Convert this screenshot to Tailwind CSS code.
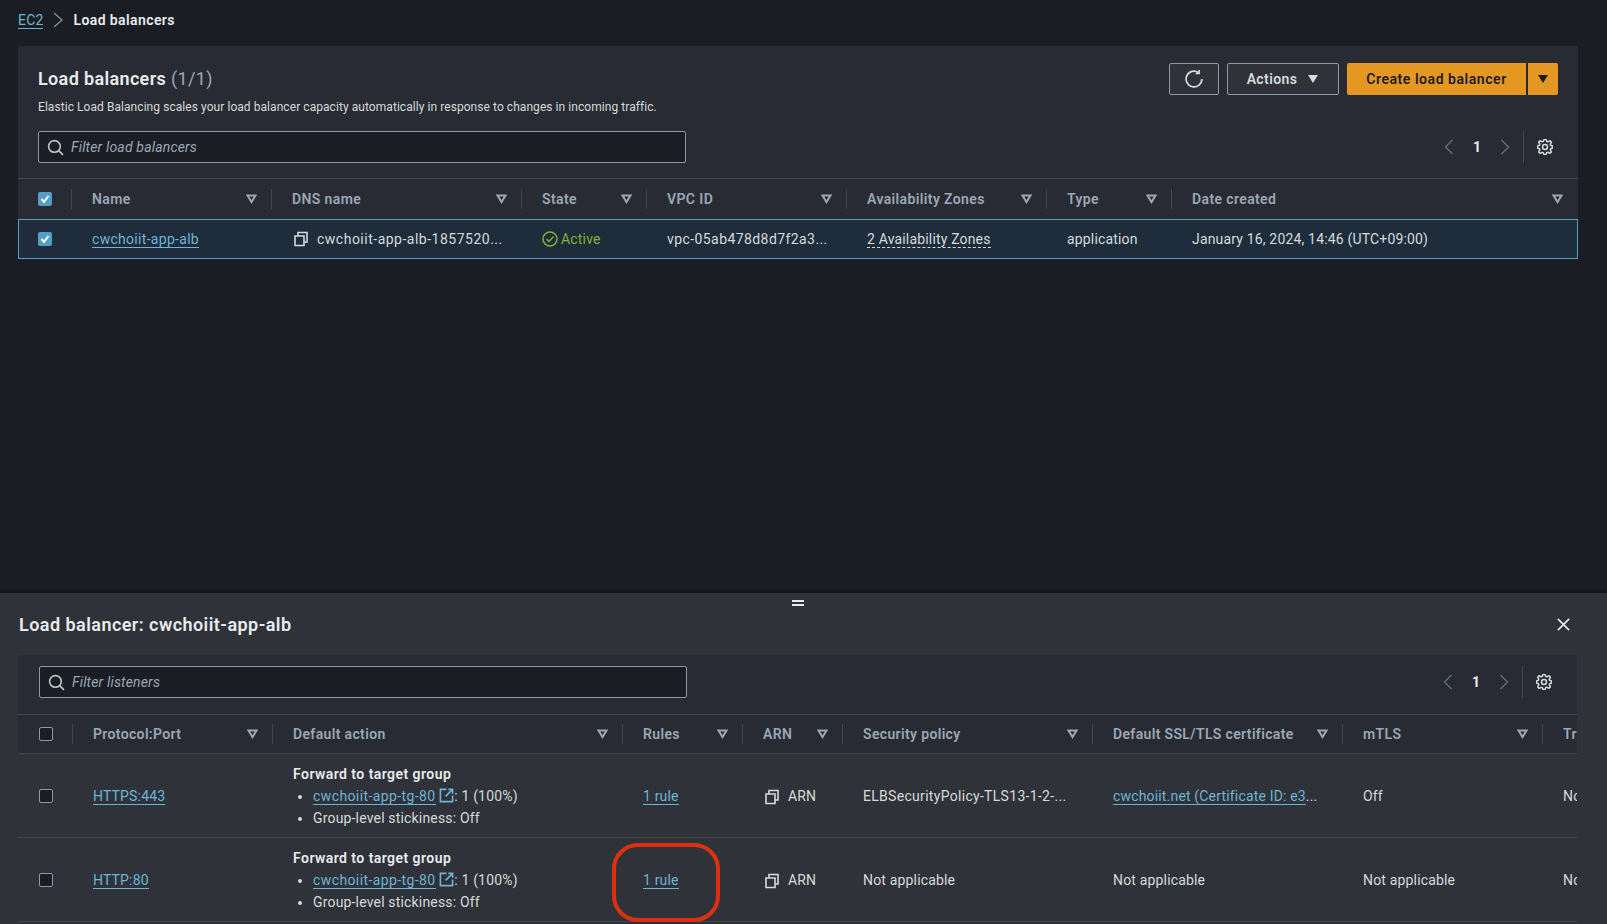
<!DOCTYPE html>
<html lang="en">
<head>
  <meta charset="UTF-8" />
  <title>Load balancers | EC2</title>
  <script src="https://cdn.jsdelivr.net/npm/@tailwindcss/browser@4"></script>
</head>
<body class="bg-[#1b1d24] font-['Roboto',sans-serif] text-[14px] tracking-[0.17px] text-[#d5dbdb]">
  <div class="h-[924px] w-[1607px] overflow-hidden flex flex-col">

    <!-- Top area -->
    <div class="h-[590px] shrink-0 px-[18px]">
      <!-- Breadcrumb -->
      <nav class="h-[46px] flex items-center pb-[6px] text-[14px]">
        <a class="text-[#6cb5d6] border-b border-[#6cb5d6] leading-[16px]">EC2</a>
        <svg class="w-[12px] h-[16px] mx-[9px] text-[#7d8998]" viewBox="0 0 12 16" fill="none" stroke="currentColor" stroke-width="1.5"><path d="M2 1l8 7-8 7"/></svg>
        <span class="font-semibold tracking-[0.4px] text-[#e9ebed]">Load balancers</span>
      </nav>

      <!-- Load balancers card -->
      <section class="bg-[#282b33] w-[1560px] h-[173px] flex flex-col">
        <div class="h-[133px] px-[20px] border-b border-[#414750] relative">
          <div class="flex justify-between pt-[18px]">
            <div>
              <h1 class="text-[18px] leading-[30px] font-semibold tracking-[0.35px] text-[#e9ebed]">Load balancers <span class="font-normal text-[#9ba7b6]">(1/1)</span></h1>
              <p class="text-[12px] leading-[16px] mt-[5px] tracking-[0.06px] text-[#d5dbdb]">Elastic Load Balancing scales your load balancer capacity automatically in response to changes in incoming traffic.</p>
            </div>
            <div class="flex items-center gap-[8px] h-[32px] self-start -mt-px">
              <button class="w-[50px] h-[32px] flex items-center justify-center border border-[#8d99a8] rounded-[2px] bg-[#2f3238] text-[#d5dbdb]">
                <svg class="w-[18px] h-[18px]" viewBox="0 0 16 16" fill="none" stroke="currentColor" stroke-width="1.5"><path d="M15 8a7 7 0 1 1-3-5.74"/><path d="M12.5 0v3h-3"/></svg>
              </button>
              <button class="w-[112px] h-[32px] flex items-center justify-center gap-[10px] border border-[#8d99a8] rounded-[2px] bg-[#2f3238] font-semibold tracking-[0.4px] text-[#d5dbdb]">
                Actions
                <svg class="w-[12px] h-[10px]" viewBox="0 0 12 10" fill="currentColor"><path d="M1 1h10L6 9z"/></svg>
              </button>
              <div class="flex gap-[2px]">
                <button class="w-[179px] h-[32px] bg-[#e59821] rounded-l-[2px] font-semibold tracking-[0.55px] text-[#1b1d24]">Create load balancer</button>
                <button class="w-[30px] h-[32px] flex items-center justify-center bg-[#e59821] rounded-r-[2px] text-[#1b1d24]">
                  <svg class="w-[12px] h-[10px]" viewBox="0 0 12 10" fill="currentColor"><path d="M1 1h10L6 9z"/></svg>
                </button>
              </div>
            </div>
          </div>
          <div class="flex items-center justify-between mt-[16px]">
            <div class="w-[648px] h-[32px] flex items-center gap-[7px] pl-[8px] bg-[#1b1d24] border border-[#8d99a8] rounded-[2px]">
              <svg class="w-[17px] h-[17px] text-[#c0c5cc]" viewBox="0 0 16 16" fill="none" stroke="currentColor" stroke-width="1.5"><circle cx="7" cy="7" r="5.5"/><path d="M11 11l4 4"/></svg>
              <span class="italic text-[#9ba7b6]">Filter load balancers</span>
            </div>
            <div class="flex items-center h-[32px] pr-[5px]">
              <svg class="w-[10px] h-[16px] text-[#5f6b7a]" viewBox="0 0 10 16" fill="none" stroke="currentColor" stroke-width="1.5"><path d="M8.5 1l-7 7 7 7"/></svg>
              <span class="w-[46px] text-center font-bold text-[#e9ebed]">1</span>
              <svg class="w-[10px] h-[16px] text-[#5f6b7a]" viewBox="0 0 10 16" fill="none" stroke="currentColor" stroke-width="1.5"><path d="M1.5 1l7 7-7 7"/></svg>
              <span class="w-px h-[32px] bg-[#414750] ml-[13px] mr-[13px]"></span>
              <svg class="w-[16px] h-[16px] text-[#d5dbdb]" viewBox="0 0 16 16" fill="none" stroke="currentColor" stroke-width="1.5" stroke-linejoin="round"><path d="M13.3 5.2l1.1-2.1L13 1.7l-2.1 1.1c-.3-.2-.7-.3-1.1-.4L9 .5H7l-.8 1.9c-.3.1-.7.2-1 .4L3.1 1.7 1.7 3.1l1.1 2.1c-.2.3-.3.7-.4 1L.5 7v2l1.9.8c.1.4.3.7.4 1.1l-1.1 2.1 1.4 1.4 2.1-1.1c.3.2.7.3 1.1.4L7 15.5h2l.8-1.9c.4-.1.7-.3 1.1-.4l2.1 1.1 1.4-1.4-1.1-2.1c.2-.3.3-.7.4-1.1l1.8-.7V7l-1.9-.8c-.1-.3-.2-.7-.4-1z"/><circle cx="8" cy="8" r="2.5"/></svg>
            </div>
          </div>
        </div>

        <!-- Table header -->
        <div class="grid grid-cols-[54px_200px_250px_125px_200px_200px_125px_406px] h-[40px] items-center font-semibold tracking-[0.38px] text-[#9ba7b6]">
          <div class="flex items-center h-[20px] pl-[20px] border-r border-[#414750]">
            <span class="w-[14px] h-[14px] rounded-[2px] bg-[#539fc5] flex items-center justify-center"><svg class="w-[12px] h-[12px] text-white" viewBox="0 0 12 12" fill="none" stroke="currentColor" stroke-width="2"><path d="M2.5 6l2.5 3 4.5-6"/></svg></span>
          </div>
          <div class="flex items-center justify-between h-[20px] pl-[20px] pr-[14px] border-r border-[#414750]">Name<svg class="w-[11px] h-[10px]" viewBox="0 0 11 10" fill="none" stroke="currentColor" stroke-width="2"><path d="M1.5 1.5h8L5.5 8z"/></svg></div>
          <div class="flex items-center justify-between h-[20px] pl-[20px] pr-[14px] border-r border-[#414750]">DNS name<svg class="w-[11px] h-[10px]" viewBox="0 0 11 10" fill="none" stroke="currentColor" stroke-width="2"><path d="M1.5 1.5h8L5.5 8z"/></svg></div>
          <div class="flex items-center justify-between h-[20px] pl-[20px] pr-[14px] border-r border-[#414750]">State<svg class="w-[11px] h-[10px]" viewBox="0 0 11 10" fill="none" stroke="currentColor" stroke-width="2"><path d="M1.5 1.5h8L5.5 8z"/></svg></div>
          <div class="flex items-center justify-between h-[20px] pl-[20px] pr-[14px] border-r border-[#414750]">VPC ID<svg class="w-[11px] h-[10px]" viewBox="0 0 11 10" fill="none" stroke="currentColor" stroke-width="2"><path d="M1.5 1.5h8L5.5 8z"/></svg></div>
          <div class="flex items-center justify-between h-[20px] pl-[20px] pr-[14px] border-r border-[#414750]">Availability Zones<svg class="w-[11px] h-[10px]" viewBox="0 0 11 10" fill="none" stroke="currentColor" stroke-width="2"><path d="M1.5 1.5h8L5.5 8z"/></svg></div>
          <div class="flex items-center justify-between h-[20px] pl-[20px] pr-[14px] border-r border-[#414750]">Type<svg class="w-[11px] h-[10px]" viewBox="0 0 11 10" fill="none" stroke="currentColor" stroke-width="2"><path d="M1.5 1.5h8L5.5 8z"/></svg></div>
          <div class="flex items-center justify-between h-[20px] pl-[20px] pr-[15px]">Date created<svg class="w-[11px] h-[10px]" viewBox="0 0 11 10" fill="none" stroke="currentColor" stroke-width="2"><path d="M1.5 1.5h8L5.5 8z"/></svg></div>
        </div>
      </section>

      <!-- Selected row -->
      <div class="grid grid-cols-[53px_200px_250px_125px_200px_200px_125px_405px] w-[1560px] h-[40px] items-center bg-[#1f2c3c] border border-[#539fc5]">
        <div class="pl-[19px]">
          <span class="w-[14px] h-[14px] rounded-[2px] bg-[#539fc5] flex items-center justify-center"><svg class="w-[12px] h-[12px] text-white" viewBox="0 0 12 12" fill="none" stroke="currentColor" stroke-width="2"><path d="M2.5 6l2.5 3 4.5-6"/></svg></span>
        </div>
        <div class="pl-[20px]"><a class="text-[#6cb5d6] border-b border-[#6cb5d6] tracking-[0.3px]">cwchoiit-app-alb</a></div>
        <div class="pl-[21px] flex items-center gap-[8px]">
          <svg class="w-[16px] h-[16px] shrink-0" viewBox="0 0 16 16" fill="none" stroke="currentColor" stroke-width="1.6"><path d="M2 5h9v9.5H2z"/><path d="M5 5V1.5h9V11h-3"/></svg>
          <span class="tracking-[0.5px] whitespace-nowrap">cwchoiit-app-alb-1857520...</span>
        </div>
        <div class="pl-[20px] flex items-center gap-[3px] text-[#7eb233]">
          <svg class="w-[16px] h-[16px] shrink-0" viewBox="0 0 16 16" fill="none" stroke="currentColor" stroke-width="1.5"><circle cx="8" cy="8" r="7"/><path d="M4.5 8l2.5 2.5 4.5-5"/></svg>
          Active
        </div>
        <div class="pl-[20px] tracking-[0.42px] whitespace-nowrap">vpc-05ab478d8d7f2a3...</div>
        <div class="pl-[20px]"><span class="border-b border-dashed border-[#d5dbdb]">2 Availability Zones</span></div>
        <div class="pl-[20px]">application</div>
        <div class="pl-[20px]">January 16, 2024, 14:46 (UTC+09:00)</div>
      </div>
    </div>

    <!-- Split panel -->
    <div class="flex-1 bg-[#2f3238] border-t-[3px] border-[#15171c] relative">
      <div class="absolute left-[792px] top-[7px] w-[12px] h-[6px] border-y-2 border-[#e9ebed]"></div>
      <div class="h-[62px] flex items-center justify-between pl-[19px] pr-[36px]">
        <h2 class="text-[18px] font-semibold tracking-[0.45px] text-[#e9ebed]">Load balancer: cwchoiit-app-alb</h2>
        <svg class="w-[15px] h-[15px] text-[#e9ebed]" viewBox="0 0 16 16" fill="none" stroke="currentColor" stroke-width="1.7"><path d="M2 2l12 12M14 2L2 14"/></svg>
      </div>

      <div class="ml-[18px] w-[1559px] overflow-hidden">
        <div class="bg-[#282b33] h-[60px] px-[21px] pt-[11px] border-b border-[#414750] flex justify-between">
          <div class="w-[648px] h-[32px] flex items-center gap-[7px] pl-[8px] bg-[#1b1d24] border border-[#8d99a8] rounded-[2px]">
            <svg class="w-[17px] h-[17px] text-[#c0c5cc]" viewBox="0 0 16 16" fill="none" stroke="currentColor" stroke-width="1.5"><circle cx="7" cy="7" r="5.5"/><path d="M11 11l4 4"/></svg>
            <span class="italic text-[#9ba7b6]">Filter listeners</span>
          </div>
          <div class="flex items-center h-[32px] pr-[4px]">
            <svg class="w-[10px] h-[16px] text-[#5f6b7a]" viewBox="0 0 10 16" fill="none" stroke="currentColor" stroke-width="1.5"><path d="M8.5 1l-7 7 7 7"/></svg>
            <span class="w-[46px] text-center font-bold text-[#e9ebed]">1</span>
            <svg class="w-[10px] h-[16px] text-[#5f6b7a]" viewBox="0 0 10 16" fill="none" stroke="currentColor" stroke-width="1.5"><path d="M1.5 1l7 7-7 7"/></svg>
            <span class="w-px h-[32px] bg-[#414750] ml-[13px] mr-[13px]"></span>
            <svg class="w-[16px] h-[16px] text-[#d5dbdb]" viewBox="0 0 16 16" fill="none" stroke="currentColor" stroke-width="1.5" stroke-linejoin="round"><path d="M13.3 5.2l1.1-2.1L13 1.7l-2.1 1.1c-.3-.2-.7-.3-1.1-.4L9 .5H7l-.8 1.9c-.3.1-.7.2-1 .4L3.1 1.7 1.7 3.1l1.1 2.1c-.2.3-.3.7-.4 1L.5 7v2l1.9.8c.1.4.3.7.4 1.1l-1.1 2.1 1.4 1.4 2.1-1.1c.3.2.7.3 1.1.4L7 15.5h2l.8-1.9c.4-.1.7-.3 1.1-.4l2.1 1.1 1.4-1.4-1.1-2.1c.2-.3.3-.7.4-1.1l1.8-.7V7l-1.9-.8c-.1-.3-.2-.7-.4-1z"/><circle cx="8" cy="8" r="2.5"/></svg>
          </div>
        </div>

        <!-- Listener header -->
        <div class="grid grid-cols-[55px_200px_350px_120px_100px_250px_250px_200px_200px] bg-[#282b33] h-[39px] items-center font-semibold tracking-[0.35px] text-[#9ba7b6] border-b border-[#414750]">
          <div class="flex items-center h-[20px] pl-[21px] border-r border-[#414750]"><span class="w-[14px] h-[14px] rounded-[2px] border border-[#8d99a8] bg-[#1b1d24]"></span></div>
          <div class="flex items-center justify-between h-[20px] pl-[20px] pr-[14px] border-r border-[#414750]">Protocol:Port<svg class="w-[11px] h-[10px]" viewBox="0 0 11 10" fill="none" stroke="currentColor" stroke-width="2"><path d="M1.5 1.5h8L5.5 8z"/></svg></div>
          <div class="flex items-center justify-between h-[20px] pl-[20px] pr-[14px] border-r border-[#414750]">Default action<svg class="w-[11px] h-[10px]" viewBox="0 0 11 10" fill="none" stroke="currentColor" stroke-width="2"><path d="M1.5 1.5h8L5.5 8z"/></svg></div>
          <div class="flex items-center justify-between h-[20px] pl-[20px] pr-[14px] border-r border-[#414750]">Rules<svg class="w-[11px] h-[10px]" viewBox="0 0 11 10" fill="none" stroke="currentColor" stroke-width="2"><path d="M1.5 1.5h8L5.5 8z"/></svg></div>
          <div class="flex items-center justify-between h-[20px] pl-[20px] pr-[14px] border-r border-[#414750]">ARN<svg class="w-[11px] h-[10px]" viewBox="0 0 11 10" fill="none" stroke="currentColor" stroke-width="2"><path d="M1.5 1.5h8L5.5 8z"/></svg></div>
          <div class="flex items-center justify-between h-[20px] pl-[20px] pr-[14px] border-r border-[#414750]">Security policy<svg class="w-[11px] h-[10px]" viewBox="0 0 11 10" fill="none" stroke="currentColor" stroke-width="2"><path d="M1.5 1.5h8L5.5 8z"/></svg></div>
          <div class="flex items-center justify-between h-[20px] pl-[20px] pr-[14px] border-r border-[#414750]">Default SSL/TLS certificate<svg class="w-[11px] h-[10px]" viewBox="0 0 11 10" fill="none" stroke="currentColor" stroke-width="2"><path d="M1.5 1.5h8L5.5 8z"/></svg></div>
          <div class="flex items-center justify-between h-[20px] pl-[20px] pr-[14px] border-r border-[#414750]">mTLS<svg class="w-[11px] h-[10px]" viewBox="0 0 11 10" fill="none" stroke="currentColor" stroke-width="2"><path d="M1.5 1.5h8L5.5 8z"/></svg></div>
          <div class="h-[20px] pl-[20px] whitespace-nowrap">Trust store</div>
        </div>

        <!-- Listener rows -->
        <div class="grid grid-cols-[55px_200px_350px_120px_100px_250px_250px_200px_200px] h-[84px] pt-[2px] items-center border-b border-[#414750]">
          <div class="pl-[21px] -mt-[2px]"><span class="block w-[14px] h-[14px] rounded-[2px] border border-[#8d99a8] bg-[#1b1d24]"></span></div>
          <div class="pl-[20px]"><a class="text-[#6cb5d6] border-b border-[#6cb5d6]">HTTPS:443</a></div>
          <div class="pl-[20px] leading-[22px] -mt-[2px]">
            <div class="font-semibold tracking-[0.45px] text-[#e9ebed]">Forward to target group</div>
            <ul class="list-disc pl-[20px]">
              <li><a class="text-[#6cb5d6] border-b border-[#6cb5d6] tracking-[0.4px]">cwchoiit-app-tg-80</a> <svg class="inline w-[15px] h-[15px] align-[-2px] text-[#6cb5d6]" viewBox="0 0 16 16" fill="none" stroke="currentColor" stroke-width="1.7"><path d="M8 1.5H1.5v13h13V8"/><path d="M10 1.5h4.5V6M14.5 1.5L7 9"/></svg>: 1 (100%)</li>
              <li>Group-level stickiness: Off</li>
            </ul>
          </div>
          <div class="pl-[20px]"><a class="text-[#6cb5d6] border-b border-[#6cb5d6]">1 rule</a></div>
          <div class="pl-[21px] flex items-center gap-[8px]">
            <svg class="w-[16px] h-[16px] shrink-0" viewBox="0 0 16 16" fill="none" stroke="currentColor" stroke-width="1.6"><path d="M2 5h9v9.5H2z"/><path d="M5 5V1.5h9V11h-3"/></svg>ARN
          </div>
          <div class="pl-[20px] tracking-[0.3px] whitespace-nowrap">ELBSecurityPolicy-TLS13-1-2-...</div>
          <div class="pl-[20px]"><a class="text-[#6cb5d6] border-b border-[#6cb5d6]">cwchoiit.net (Certificate ID: e3</a>...</div>
          <div class="pl-[20px]">Off</div>
          <div class="pl-[20px] whitespace-nowrap">Not applicable</div>
        </div>

        <div class="grid grid-cols-[55px_200px_350px_120px_100px_250px_250px_200px_200px] h-[84px] pt-[2px] items-center border-b border-[#414750]">
          <div class="pl-[21px] -mt-[2px]"><span class="block w-[14px] h-[14px] rounded-[2px] border border-[#8d99a8] bg-[#1b1d24]"></span></div>
          <div class="pl-[20px]"><a class="text-[#6cb5d6] border-b border-[#6cb5d6]">HTTP:80</a></div>
          <div class="pl-[20px] leading-[22px] -mt-[2px]">
            <div class="font-semibold tracking-[0.45px] text-[#e9ebed]">Forward to target group</div>
            <ul class="list-disc pl-[20px]">
              <li><a class="text-[#6cb5d6] border-b border-[#6cb5d6] tracking-[0.4px]">cwchoiit-app-tg-80</a> <svg class="inline w-[15px] h-[15px] align-[-2px] text-[#6cb5d6]" viewBox="0 0 16 16" fill="none" stroke="currentColor" stroke-width="1.7"><path d="M8 1.5H1.5v13h13V8"/><path d="M10 1.5h4.5V6M14.5 1.5L7 9"/></svg>: 1 (100%)</li>
              <li>Group-level stickiness: Off</li>
            </ul>
          </div>
          <div class="pl-[20px]"><a class="text-[#6cb5d6] border-b border-[#6cb5d6]">1 rule</a></div>
          <div class="pl-[21px] flex items-center gap-[8px]">
            <svg class="w-[16px] h-[16px] shrink-0" viewBox="0 0 16 16" fill="none" stroke="currentColor" stroke-width="1.6"><path d="M2 5h9v9.5H2z"/><path d="M5 5V1.5h9V11h-3"/></svg>ARN
          </div>
          <div class="pl-[20px]">Not applicable</div>
          <div class="pl-[20px]">Not applicable</div>
          <div class="pl-[20px]">Not applicable</div>
          <div class="pl-[20px] whitespace-nowrap">Not applicable</div>
        </div>
      </div>

      <!-- Red annotation round the rules link -->
      <div class="absolute left-[612px] top-[250px] w-[108px] h-[79px] border-[4px] border-[#dd3012] rounded-[26px]"></div>
    </div>
  </div>
</body>
</html>
